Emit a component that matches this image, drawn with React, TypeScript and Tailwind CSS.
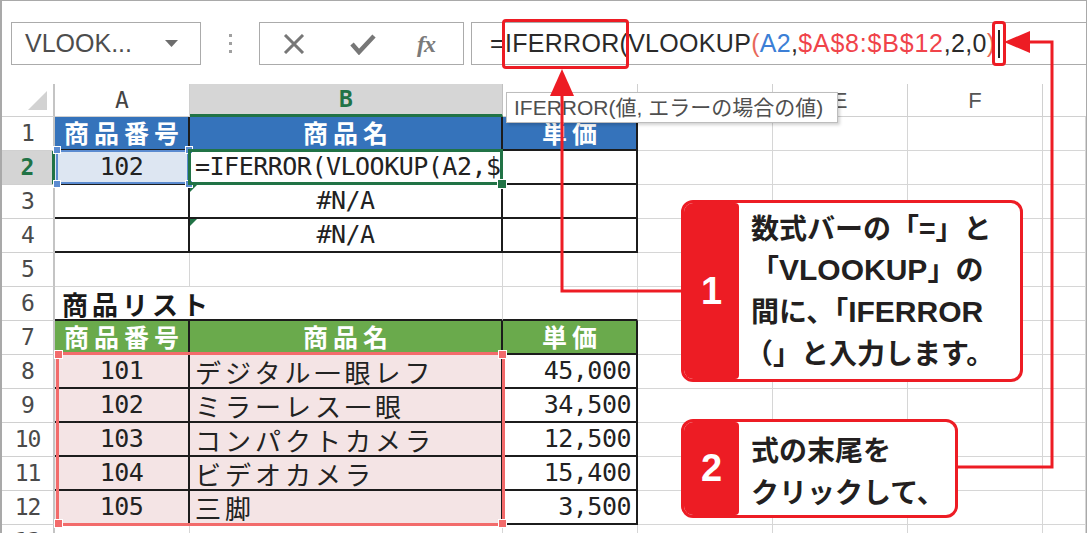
import React from 'react';
import clsx from 'clsx';

const MONO = "font-['DejaVu_Sans_Mono','Noto_Sans_CJK_JP',monospace]";
const JP = "font-['Noto_Sans_CJK_JP',sans-serif]";
const UI = "font-['Liberation_Sans','Noto_Sans_CJK_JP',sans-serif]";

const GRID = 'border-r border-b border-[#d6d6d6]';
const TBL = 'border-r-2 border-b-2 border-[#1c1c1c]';

const Cell = ({
  w,
  className,
  children,
}: {
  w: string;
  className?: string;
  children?: React.ReactNode;
}) => (
  <div className={clsx('h-full shrink-0 flex items-center whitespace-nowrap', w, className)}>
    {children}
  </div>
);

const RowHead = ({ n, active }: { n: number; active?: boolean }) => (
  <div
    className={clsx(
      'w-[53px] h-full shrink-0 flex items-center justify-center border-b border-[#d0d0d0] text-[23px] tracking-[-1px]',
      MONO,
      active
        ? 'bg-[#d4d4d4] text-[#217346] font-bold border-r-[3px] border-r-[#217346]'
        : 'border-r-2 border-r-[#c4c4c4] text-[#4a4a4a]'
    )}
  >
    {n}
  </div>
);

// columns D..G, plain grid
const Rest = () => (
  <>
    <Cell w="w-[135px]" className={GRID} />
    <Cell w="w-[135px]" className={GRID} />
    <Cell w="w-[135px]" className={GRID} />
    <Cell w="flex-1" className={GRID} />
  </>
);

const Head = ({ children }: { children: React.ReactNode }) => (
  <span className={clsx('w-full text-center text-white font-bold text-[25px] tracking-[5px] pl-[5px]', JP)}>
    {children}
  </span>
);

const ErrMark = () => (
  <div className="absolute top-0 left-0 w-0 h-0 border-t-[7px] border-t-[#217346] border-r-[7px] border-r-transparent" />
);

const products = [
  { id: '101', name: 'デジタル一眼レフ', price: '45,000' },
  { id: '102', name: 'ミラーレス一眼', price: '34,500' },
  { id: '103', name: 'コンパクトカメラ', price: '12,500' },
  { id: '104', name: 'ビデオカメラ', price: '15,400' },
  { id: '105', name: '三脚', price: '3,500' },
];

const Corner = ({ pos }: { pos: string }) => (
  <div className={clsx('absolute w-[8px] h-[8px] border border-white', pos)} />
);

export default function App() {
  return (
    <div className="relative w-[1087px] h-[533px] overflow-hidden bg-white">
      <div className="h-full border-l-2 border-t border-r border-[#a9a9a9]">
        {/* formula bar */}
        <div className="h-[83px] flex items-start pt-[21px] pl-[9px]">
          <div className="w-[190px] h-[43px] shrink-0 border border-[#ababab] flex items-center justify-between pl-[13px] pr-[22px]">
            <span className={clsx('text-[25px] text-[#4d4d4d]', UI)}>VLOOK...</span>
            <svg width="13" height="7" viewBox="0 0 13 7">
              <polygon points="0,0 13,0 6.5,7" fill="#6d6d6d" />
            </svg>
          </div>
          <div className="w-[58px] h-[43px] shrink-0 flex flex-col items-center justify-center gap-[5px]">
            <div className="w-[3px] h-[3px] bg-[#a0a0a0]" />
            <div className="w-[3px] h-[3px] bg-[#a0a0a0]" />
            <div className="w-[3px] h-[3px] bg-[#a0a0a0]" />
          </div>
          <div className="w-[205px] h-[43px] shrink-0 border border-[#ababab] flex items-center pl-[23px]">
            <svg width="22" height="20" viewBox="0 0 22 20">
              <path d="M2 1 L20 19 M20 1 L2 19" stroke="#777" strokeWidth="3" />
            </svg>
            <svg className="ml-[45px]" width="26" height="22" viewBox="0 0 26 22">
              <path d="M2 11 L9 19 L24 3" stroke="#777" strokeWidth="4.5" fill="none" />
            </svg>
            <span className="ml-[41px] text-[24px] italic font-bold text-[#7a7a7a] font-['Liberation_Serif',serif] tracking-[-1px]">
              fx
            </span>
          </div>
          <div className="flex-1 h-[43px] ml-[7px] border-y border-l border-[#ababab] flex items-center pl-[18px]">
            <div className={clsx('flex items-center text-[25px] tracking-[0.3px] text-[#2a2a2a] whitespace-nowrap', UI)}>
              <span>=</span>
              <span className="relative">
                IFERROR(
                <span className="absolute -left-[3px] -right-[1px] -top-[6px] -bottom-[7px] border-[3px] border-[#ed1c24] rounded-[4px]" />
              </span>
              <span>VLOOKUP</span>
              <span className="text-[#e8685a]">(</span>
              <span className="text-[#3c7fd6]">A2</span>
              <span>,</span>
              <span className="text-[#f0434a] tracking-[0.8px]">$A$8:$B$12</span>
              <span>,2,0</span>
              <span className="text-[#e8685a]">)</span>
              <span className="relative ml-[3px] w-[2px] h-[28px] bg-[#222]">
                <span className="absolute -left-[6px] -right-[6px] -top-[9px] -bottom-[8px] border-[3px] border-[#ed1c24] rounded-[4px]" />
              </span>
            </div>
          </div>
        </div>

        {/* column headers */}
        <div className="flex h-[33px]">
          <div className="w-[53px] h-full shrink-0 flex items-end justify-end pr-[6px] pb-[6px] border-r-2 border-r-[#c4c4c4] border-b border-b-[#d0d0d0]">
            <svg width="19" height="19" viewBox="0 0 19 19">
              <polygon points="19,0 19,19 0,19" fill="#d2d2d2" />
            </svg>
          </div>
          <Cell w="w-[135px]" className={clsx('justify-center border-r border-b border-[#d0d0d0] text-[23px] text-[#444]', MONO)}>
            A
          </Cell>
          <Cell w="w-[313px]" className={clsx('justify-center bg-[#d6d6d6] border-r border-r-[#c0c0c0] border-b-[3px] border-b-[#217346] text-[23px] font-bold text-[#217346]', MONO)}>
            B
          </Cell>
          {/* C and D labels sit under the tooltip */}
          <Cell w="w-[135px]" className="border-r border-b border-[#d0d0d0]" />
          <Cell w="w-[135px]" className="border-r border-b border-[#d0d0d0]" />
          <Cell w="w-[135px]" className={clsx('justify-center border-r border-b border-[#d0d0d0] text-[22px] text-[#555]', UI)}>
            E
          </Cell>
          <Cell w="w-[135px]" className={clsx('justify-center border-r border-b border-[#d0d0d0] text-[22px] text-[#555]', UI)}>
            F
          </Cell>
          <Cell w="flex-1" className="border-b border-[#d0d0d0]" />
        </div>

        {/* row 1 */}
        <div className="flex h-[34px]">
          <RowHead n={1} />
          <Cell w="w-[135px]" className={clsx(TBL, 'bg-[#3573bb]')}>
            <Head>商品番号</Head>
          </Cell>
          <Cell w="w-[313px]" className={clsx(TBL, 'bg-[#3573bb]')}>
            <Head>商品名</Head>
          </Cell>
          <Cell w="w-[135px]" className={clsx(TBL, 'bg-[#3573bb]')}>
            <Head>単価</Head>
          </Cell>
          <Rest />
        </div>

        {/* row 2 */}
        <div className="flex h-[34px]">
          <RowHead n={2} active />
          <Cell w="w-[135px]" className={clsx(TBL, 'relative justify-center bg-[#dde6f2]')}>
            <span className={clsx('text-[25px] tracking-[-0.5px] text-[#222]', MONO)}>102</span>
            <div className="absolute z-10 -top-[1px] left-[1px] -right-[1px] -bottom-[1px] border-2 border-[#5b8bd0]" />
            <Corner pos="z-10 -top-[5px] -left-[2px] bg-[#5b8bd0]" />
            <Corner pos="z-10 -top-[5px] -right-[5px] bg-[#5b8bd0]" />
            <Corner pos="z-10 -bottom-[5px] -left-[2px] bg-[#5b8bd0]" />
            <Corner pos="z-10 -bottom-[5px] -right-[5px] bg-[#5b8bd0]" />
          </Cell>
          <Cell w="w-[313px]" className={clsx(TBL, 'relative')}>
            <div className={clsx('w-full overflow-hidden pl-[5px] text-[25px] tracking-[-0.5px] text-[#222]', MONO)}>
              =IFERROR(VLOOKUP(A2,$A$8:$B$12,2,0)
            </div>
            <div className="absolute z-10 -top-[2px] -left-[2px] -right-[2px] -bottom-[2px] border-[3px] border-[#217346]" />
            <div className="absolute z-10 -right-[6px] -bottom-[6px] w-[10px] h-[10px] bg-[#217346] border border-white" />
          </Cell>
          <Cell w="w-[135px]" className={TBL} />
          <Rest />
        </div>

        {/* rows 3-4 */}
        {[3, 4].map((n) => (
          <div key={n} className="flex h-[34px]">
            <RowHead n={n} />
            <Cell w="w-[135px]" className={TBL} />
            <Cell w="w-[313px]" className={clsx(TBL, 'relative justify-center')}>
              <ErrMark />
              <span className={clsx('text-[25px] tracking-[-0.5px] text-[#222]', MONO)}>#N/A</span>
            </Cell>
            <Cell w="w-[135px]" className={TBL} />
            <Rest />
          </div>
        ))}

        {/* row 5 */}
        <div className="flex h-[34px]">
          <RowHead n={5} />
          <Cell w="w-[135px]" className={GRID} />
          <Cell w="w-[313px]" className={GRID} />
          <Cell w="w-[135px]" className={GRID} />
          <Rest />
        </div>

        {/* row 6 */}
        <div className="flex h-[34px]">
          <RowHead n={6} />
          <Cell w="w-[135px]" className="border-b-2 border-[#1c1c1c] pl-[7px]">
            <span className={clsx('text-[26px] font-bold tracking-[4px] text-[#1a1a1a]', JP)}>商品リスト</span>
          </Cell>
          <Cell w="w-[313px]" className="border-r border-r-[#d6d6d6] border-b-2 border-b-[#1c1c1c]" />
          <Cell w="w-[135px]" className="border-r border-r-[#d6d6d6] border-b-2 border-b-[#1c1c1c]" />
          <Rest />
        </div>

        {/* row 7 */}
        <div className="flex h-[34px]">
          <RowHead n={7} />
          <Cell w="w-[135px]" className={clsx(TBL, 'bg-[#6aaa4c]')}>
            <Head>商品番号</Head>
          </Cell>
          <Cell w="w-[313px]" className={clsx(TBL, 'bg-[#6aaa4c]')}>
            <Head>商品名</Head>
          </Cell>
          <Cell w="w-[135px]" className={clsx(TBL, 'bg-[#6aaa4c]')}>
            <Head>単価</Head>
          </Cell>
          <Rest />
        </div>

        {/* rows 8-12 */}
        {products.map((p, i) => (
          <div key={p.id} className="flex h-[34px]">
            <RowHead n={8 + i} />
            <Cell w="w-[135px]" className={clsx(TBL, 'justify-center bg-[#f4e4e5]')}>
              <span className={clsx('text-[25px] tracking-[-0.5px] text-[#222]', MONO)}>{p.id}</span>
            </Cell>
            <Cell w="w-[313px]" className={clsx(TBL, 'bg-[#f4e4e5] pl-[5px]')}>
              <span className={clsx('text-[26px] tracking-[4px] text-[#222]', JP)}>{p.name}</span>
            </Cell>
            <Cell w="w-[135px]" className={clsx(TBL, 'justify-end pr-[5px]')}>
              <span className={clsx('text-[25px] tracking-[-0.5px] text-[#222]', MONO)}>{p.price}</span>
            </Cell>
            <Rest />
          </div>
        ))}

        {/* row 13 */}
        <div className="flex h-[34px]">
          <RowHead n={13} />
          <Cell w="w-[135px]" className={GRID} />
          <Cell w="w-[313px]" className={GRID} />
          <Cell w="w-[135px]" className={GRID} />
          <Rest />
        </div>
      </div>

      {/* reference range A8:B12 */}
      <div className="absolute left-[56px] top-[352px] w-[449px] h-[174px] border-[3px] border-[#f26b6b]">
        <div className="absolute -left-[5px] -top-[5px] w-[9px] h-[9px] bg-[#f26b6b] border border-white" />
        <div className="absolute -right-[5px] -top-[5px] w-[9px] h-[9px] bg-[#f26b6b] border border-white" />
        <div className="absolute -left-[5px] -bottom-[5px] w-[9px] h-[9px] bg-[#f26b6b] border border-white" />
        <div className="absolute -right-[5px] -bottom-[5px] w-[9px] h-[9px] bg-[#f26b6b] border border-white" />
      </div>

      {/* function tooltip */}
      <div
        className={clsx(
          'absolute left-[506px] top-[92px] w-[332px] h-[31px] bg-white border border-[#bdbdbd] shadow-[2px_2px_3px_rgba(0,0,0,0.18)] flex items-center pl-[7px] text-[21px] text-[#4f4f4f] whitespace-nowrap',
          UI
        )}
      >
        IFERROR(値, エラーの場合の値)
      </div>

      {/* connectors */}
      <svg className="absolute inset-0 pointer-events-none" width="1087" height="533" viewBox="0 0 1087 533">
        <path d="M681 291 H562 V92" stroke="#ed1c24" strokeWidth="3" fill="none" />
        <polygon points="562,69 550,96 574,96" fill="#ed1c24" />
        <path d="M957 467 H1052 V42 H1026" stroke="#ed1c24" strokeWidth="3" fill="none" />
        <polygon points="1004,42 1030,31 1030,53" fill="#ed1c24" />
      </svg>

      {/* callout 1 */}
      <div className="absolute left-[681px] top-[200px] w-[342px] h-[182px] flex bg-white border-[3px] border-[#ed1c24] rounded-[12px] overflow-hidden">
        <div className="w-[55px] shrink-0 bg-[#ed1c24] rounded-r-[4px] flex items-center justify-center">
          <span className={clsx('text-white font-bold text-[38px]', UI)}>1</span>
        </div>
        <div className={clsx('pl-[12px] pt-[4px] text-[28px] leading-[41px] font-bold text-[#231f20] whitespace-nowrap', JP)}>
          <div>数式バーの「=」と</div>
          <div>
            「<span className={clsx('text-[30px]', UI)}>VLOOKUP</span>」の
          </div>
          <div>
            間に、「<span className={clsx('text-[30px]', UI)}>IFERROR</span>
          </div>
          <div className="-ml-[6px]">（」と入力します。</div>
        </div>
      </div>

      {/* callout 2 */}
      <div className="absolute left-[681px] top-[419px] w-[277px] h-[99px] flex bg-white border-[3px] border-[#ed1c24] rounded-[12px] overflow-hidden">
        <div className="w-[55px] shrink-0 bg-[#ed1c24] rounded-r-[4px] flex items-center justify-center">
          <span className={clsx('text-white font-bold text-[38px]', UI)}>2</span>
        </div>
        <div className={clsx('pl-[12px] pt-[6px] text-[28px] leading-[42px] font-bold text-[#231f20] whitespace-nowrap', JP)}>
          <div>式の末尾を</div>
          <div>クリックして、</div>
        </div>
      </div>
    </div>
  );
}
